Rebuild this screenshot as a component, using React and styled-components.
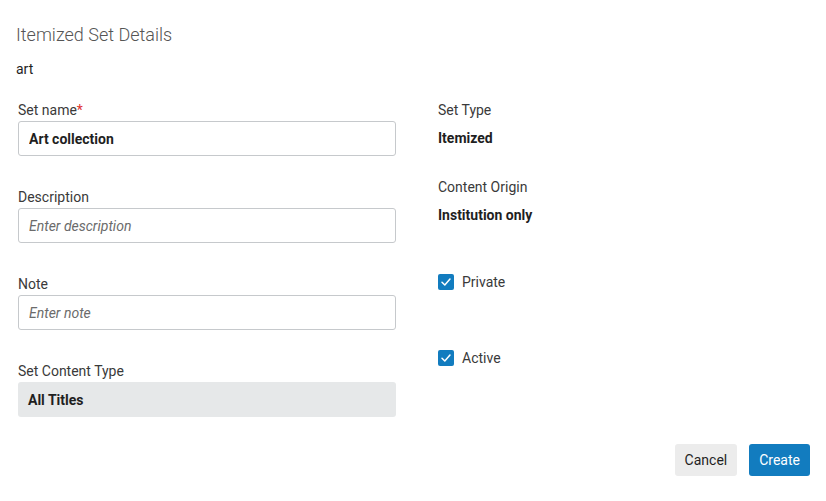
import styled, { createGlobalStyle } from 'styled-components';

const C = {
  text: '#3a3a3a',
  strong: '#1f1f1f',
  muted: '#555555',
  placeholder: '#6b6b6b',
  border: '#c6c9cc',
  readonly: '#e6e8e9',
  blue: '#127cbf',
  cancel: '#ececec',
  required: '#e0312f',
};

const Global = createGlobalStyle`
  html, body { margin:0; padding:0; background:#fff; }
  body { font-family: Roboto, "Open Sans", Arial, sans-serif; color:${C.text}; }
  * { box-sizing:border-box; }
`;

// ── Layout ────────────────────────────────────────────────────────────────────
const Page = styled.div`
  width:826px;height:501px;padding:24px 16px 0 16px;display:flex;flex-direction:column;
`;
const Title = styled.h1`
  margin:0;font-size:18px;font-weight:300;line-height:22px;color:${C.muted};
`;
const SubTitle = styled.div`
  margin-top:13px;font-size:14px;line-height:20px;color:${C.strong};
`;
const Form = styled.div`
  margin-top:21px;padding-left:2px;display:grid;grid-template-columns:378px 1fr;column-gap:42px;
`;
const Col = styled.div`display:flex;flex-direction:column;`;

// ── Left column fields ────────────────────────────────────────────────────────
const Field = styled.div`
  display:flex;flex-direction:column;margin-bottom:31px;
  &:last-child{margin-bottom:0;}
`;
const Label = styled.label`
  font-size:14px;line-height:20px;color:${C.text};margin-bottom:1px;
`;
const Req = styled.span`color:${C.required};`;
const Input = styled.input`
  height:35px;width:100%;border:1px solid ${C.border};border-radius:3px;padding:0 10px;
  font-family:Roboto, Arial, sans-serif;font-size:14px;color:${C.strong};background:#fff;
  font-weight:${({ $bold }) => $bold ? 700 : 400};outline:none;
  &::placeholder{font-style:italic;color:${C.placeholder};font-weight:400;}
`;
const ReadOnly = styled.div`
  height:35px;display:flex;align-items:center;padding:0 10px;border-radius:3px;
  background:${C.readonly};font-size:14px;font-weight:700;color:${C.strong};
`;

// ── Right column ──────────────────────────────────────────────────────────────
const InfoGroup = styled.div`
  display:flex;flex-direction:column;gap:8px;margin-bottom:29px;
`;
const InfoLabel = styled.div`font-size:14px;line-height:20px;color:${C.text};`;
const InfoValue = styled.div`font-size:14px;line-height:20px;font-weight:700;color:${C.strong};`;
const CheckRow = styled.label`
  display:flex;align-items:center;gap:8px;height:20px;font-size:14px;color:${C.text};
  margin-top:${({ $mt }) => $mt}px;
`;
const Box = styled.span`
  width:16px;height:16px;border-radius:2px;background:${C.blue};
  display:flex;align-items:center;justify-content:center;flex-shrink:0;
`;

// ── Footer ────────────────────────────────────────────────────────────────────
const Footer = styled.div`
  margin-top:27px;display:flex;justify-content:flex-end;gap:12px;
`;
const Button = styled.button`
  height:32px;padding:0 10px;border:none;border-radius:3px;
  font-family:Roboto, Arial, sans-serif;font-size:14px;cursor:pointer;
  background:${({ $primary }) => $primary ? C.blue : C.cancel};
  color:${({ $primary }) => $primary ? '#fff' : C.strong};
`;

function Check({ label, mt }) {
  return (
    <CheckRow $mt={mt}>
      <Box>
        <svg width="12" height="12" viewBox="0 0 12 12">
          <path d="M2 6.3 L4.8 9 L10 3" fill="none" stroke="#fff" strokeWidth="1.5" strokeLinecap="round" strokeLinejoin="round" />
        </svg>
      </Box>
      {label}
    </CheckRow>
  );
}

export default function App() {
  return (
    <Page>
      <Global />
      <Title>Itemized Set Details</Title>
      <SubTitle>art</SubTitle>
      <Form>
        <Col>
          <Field>
            <Label>Set name<Req>*</Req></Label>
            <Input $bold defaultValue="Art collection" />
          </Field>
          <Field>
            <Label>Description</Label>
            <Input placeholder="Enter description" />
          </Field>
          <Field>
            <Label>Note</Label>
            <Input placeholder="Enter note" />
          </Field>
          <Field>
            <Label>Set Content Type</Label>
            <ReadOnly>All Titles</ReadOnly>
          </Field>
        </Col>
        <Col>
          <InfoGroup>
            <InfoLabel>Set Type</InfoLabel>
            <InfoValue>Itemized</InfoValue>
          </InfoGroup>
          <InfoGroup>
            <InfoLabel>Content Origin</InfoLabel>
            <InfoValue>Institution only</InfoValue>
          </InfoGroup>
          <Check label="Private" mt={18} />
          <Check label="Active" mt={56} />
        </Col>
      </Form>
      <Footer>
        <Button>Cancel</Button>
        <Button $primary>Create</Button>
      </Footer>
    </Page>
  );
}
